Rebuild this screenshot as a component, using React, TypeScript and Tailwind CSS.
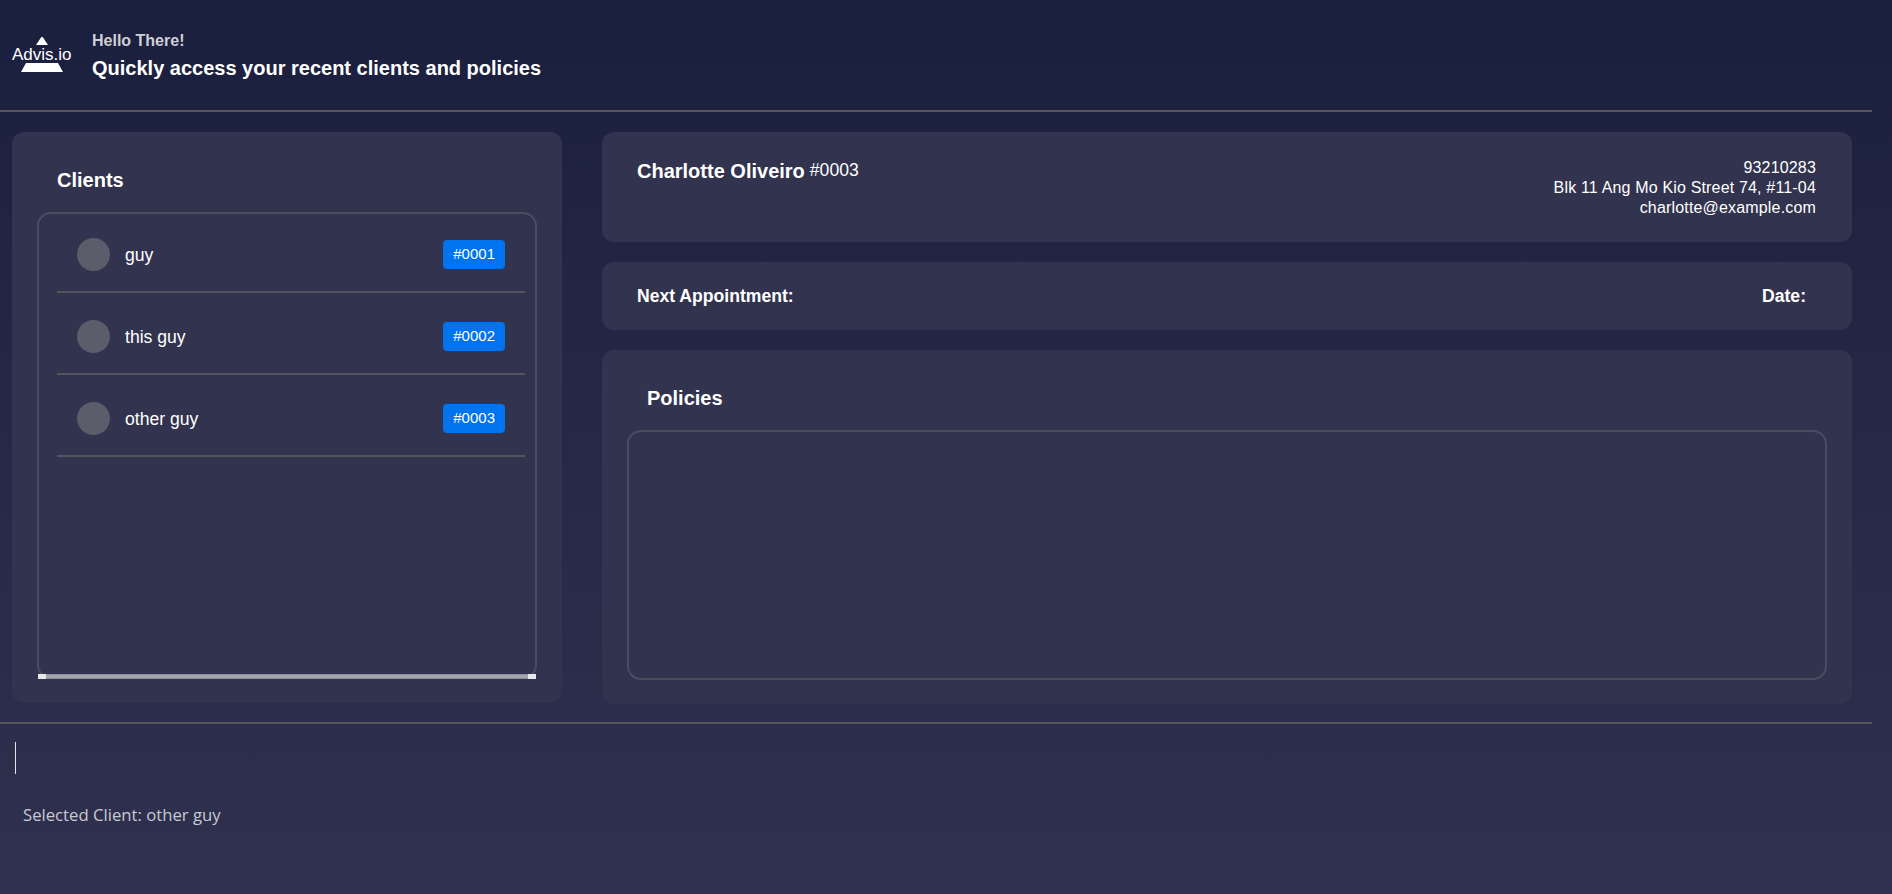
const clients = [
  { name: 'guy', id: '#0001' },
  { name: 'this guy', id: '#0002' },
  { name: 'other guy', id: '#0003' },
];

function Logo() {
  return (
    <div className="relative w-[60px] h-[36px] ml-[12px] shrink-0">
      <svg width="60" height="36" viewBox="0 0 60 36" className="absolute left-0 top-0">
        <polygon points="30,-1 36,8 24,8" fill="#fff" />
        <polygon points="14,26 46,26 51,35 9,35" fill="#fff" />
      </svg>
      <span className="absolute left-0 top-[8px] text-[17px] leading-[20px] text-white whitespace-nowrap">
        Advis.io
      </span>
    </div>
  );
}

function ClientRow({ name, id }: { name: string; id: string }) {
  return (
    <div className="h-[82px] ml-[18px] mr-[10px] pt-[6px] flex items-center border-b-2 border-[#54545f] pl-[20px] pr-[20px]">
      <div className="w-[33px] h-[33px] rounded-full bg-[#5c5d6a] shrink-0" />
      <span className="ml-[15px] mt-[3px] text-[17.6px] text-white">{name}</span>
      <span className="ml-auto h-[29px] px-[10px] flex items-center rounded-[4px] bg-[#0073ee] text-[15px] text-white">
        {id}
      </span>
    </div>
  );
}

export default function App() {
  return (
    <div className="min-h-[894px] bg-gradient-to-b from-[#1b1f3e] to-[#30314f] font-['Liberation_Sans',Arial,sans-serif] text-white overflow-hidden">
      <div className="w-[1872px]">
        <header className="h-[112px] border-b-2 border-[#56565f] flex items-center">
          <Logo />
          <div className="ml-[20px]">
            <p className="mt-[1px] text-[16px] leading-[20px] font-bold text-[#cfcfd6]">Hello There!</p>
            <h1 className="mt-[5px] text-[20px] leading-[24px] font-bold">Quickly access your recent clients and policies</h1>
          </div>
        </header>

        <main className="flex gap-[40px] pl-[12px] pr-[20px] pt-[20px]">
          <section className="w-[550px] h-[571px] shrink-0 rounded-[12px] bg-[#32334e] pt-[36px] px-[25px] flex flex-col">
            <h2 className="ml-[20px] text-[20px] leading-[24px] font-bold">Clients</h2>
            <div className="mt-[20px] w-[500px] h-[467px] border-2 border-[#4c4c60] rounded-[14px] flex flex-col">
              <div className="flex-1 -mt-[3px]">
                {clients.map((c) => (
                  <ClientRow key={c.id} name={c.name} id={c.id} />
                ))}
              </div>
              <div className="h-[5px] -mb-[2px] -mx-[1px] flex bg-[#8d8d99]">
                <div className="w-[8px] bg-[#e8e8ea]" />
                <div className="flex-1 my-[1px] bg-[#a6a6ae]" />
                <div className="w-[8px] bg-[#e8e8ea]" />
              </div>
            </div>
          </section>

          <div className="flex-1 flex flex-col gap-[20px]">
            <section className="h-[110px] rounded-[12px] bg-[#32334e] pl-[35px] pr-[36px] pt-[27px] flex justify-between">
              <div className="flex items-start">
                <h2 className="text-[20px] leading-[24px] font-bold">Charlotte Oliveiro</h2>
                <span className="ml-[5px] text-[17.6px] leading-[22px]">#0003</span>
              </div>
              <div className="text-right text-[16px] leading-[20px] tracking-[0.17px] -mt-[1px]">
                <p>93210283</p>
                <p>Blk 11 Ang Mo Kio Street 74, #11-04</p>
                <p>charlotte@example.com</p>
              </div>
            </section>

            <section className="h-[68px] rounded-[12px] bg-[#32334e] pl-[35px] pr-[46px] flex items-center justify-between text-[17.6px] font-bold">
              <span>Next Appointment:</span>
              <span>Date:</span>
            </section>

            <section className="h-[354px] rounded-[12px] bg-[#32334e] pl-[25px] pr-[25px] pt-[36px]">
              <h2 className="ml-[20px] text-[20px] leading-[24px] font-bold">Policies</h2>
              <div className="mt-[20px] h-[250px] border-2 border-[#4c4c60] rounded-[14px]" />
            </section>
          </div>
        </main>

        <footer className="mt-[18px] border-t-2 border-[#56565f] pl-[15px] pt-[18px]">
          <div className="w-[1px] h-[32px] bg-[#e4e4ea]" />
          <p className="mt-[29px] ml-[8px] font-['Open_Sans',sans-serif] text-[16.7px] leading-[24px] text-[#c9c9d2]">
            Selected Client: other guy
          </p>
        </footer>
      </div>
    </div>
  );
}
